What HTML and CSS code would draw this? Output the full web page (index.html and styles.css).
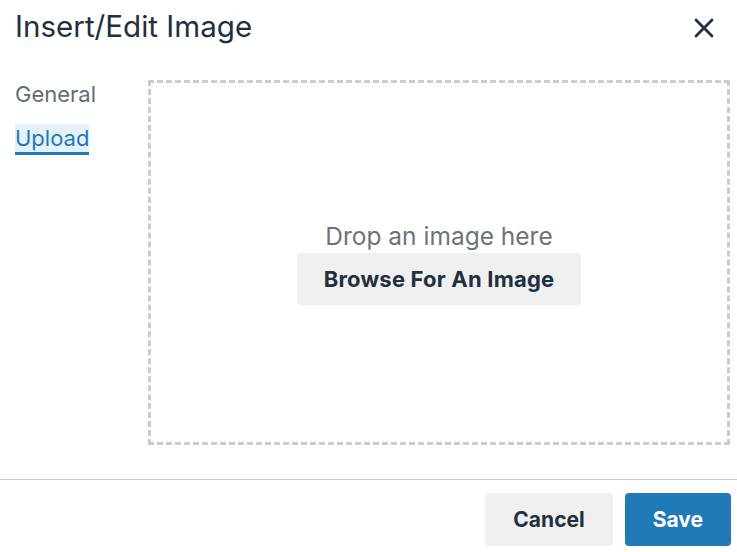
FILE: index.html
```html
<!DOCTYPE html>
<html lang="en">
<head>
<meta charset="utf-8">
<title>Insert/Edit Image</title>
<link rel="stylesheet" href="styles.css">
</head>
<body>
<div class="dialog">
  <div class="header">
    <h1 class="title">Insert/Edit Image</h1>
    <button class="close" aria-label="Close">
      <svg viewBox="0 0 20 20" width="20" height="20"><path d="M2 2L18 18M18 2L2 18" stroke="#222f3e" stroke-width="2.8" stroke-linecap="round" fill="none"/></svg>
    </button>
  </div>
  <div class="body">
    <div class="tabs">
      <div class="tab">General</div>
      <div class="tab active">Upload</div>
    </div>
    <div class="dropzone">
      <p class="drop-text">Drop an image here</p>
      <button class="btn btn-secondary browse">Browse For An Image</button>
    </div>
  </div>
  <div class="footer">
    <button class="btn btn-secondary">Cancel</button>
    <button class="btn btn-primary">Save</button>
  </div>
</div>
</body>
</html>
```
FILE: styles.css
```css
html, body {
  margin: 0;
  padding: 0;
  background: #ffffff;
}
body {
  font-family: Inter, "Noto Sans", sans-serif;
  color: #222f3e;
}
.dialog {
  width: 737px;
  height: 552px;
  display: flex;
  flex-direction: column;
}
.header {
  height: 80px;
  box-sizing: border-box;
  padding: 6px 0 0 15px;
  display: flex;
  justify-content: space-between;
  align-items: flex-start;
}
.title {
  margin: 0;
  font-size: 29.6px;
  line-height: 40px;
  font-weight: 400;
  color: #222f3e;
}
.close {
  margin: 12px 23px 0 0;
  padding: 0;
  border: 0;
  background: none;
  width: 20px;
  height: 20px;
  display: flex;
}
.body {
  height: 399px;
  display: flex;
  padding-left: 15px;
  padding-right: 7px;
}
.tabs {
  width: 133px;
  display: flex;
  flex-direction: column;
  align-items: flex-start;
  gap: 13px;
}
.tab {
  font-size: 22px;
  line-height: 28px;
  color: #646d78;
  border-bottom: 3px solid transparent;
}
.tab.active {
  color: #207ab7;
  background: #e6f0f8;
  border-bottom-color: #207ab7;
}
.dropzone {
  flex: 1;
  height: 365px;
  box-sizing: border-box;
  border: 3px dashed #cccccc;
  display: flex;
  flex-direction: column;
  align-items: center;
  justify-content: center;
}
.drop-text {
  margin: 0 0 2px;
  font-size: 24.5px;
  line-height: 30px;
  color: #6d737a;
}
.btn {
  font-family: Inter, "Noto Sans", sans-serif;
  font-size: 21px;
  font-weight: 700;
  height: 53px;
  padding: 0 28px;
  border: 0;
  border-radius: 4px;
  cursor: pointer;
}
.btn-secondary {
  background: #f0f0f0;
  color: #222f3e;
}
.btn-primary {
  background: #207ab7;
  color: #ffffff;
}
.browse {
  height: 52px;
  padding: 0 27px;
  font-size: 22px;
  letter-spacing: 0.2px;
}
.footer {
  flex: 1;
  border-top: 1px solid #cccccc;
  display: flex;
  justify-content: flex-end;
  align-items: flex-start;
  gap: 12px;
  padding: 13px 6px 0 0;
}
```
